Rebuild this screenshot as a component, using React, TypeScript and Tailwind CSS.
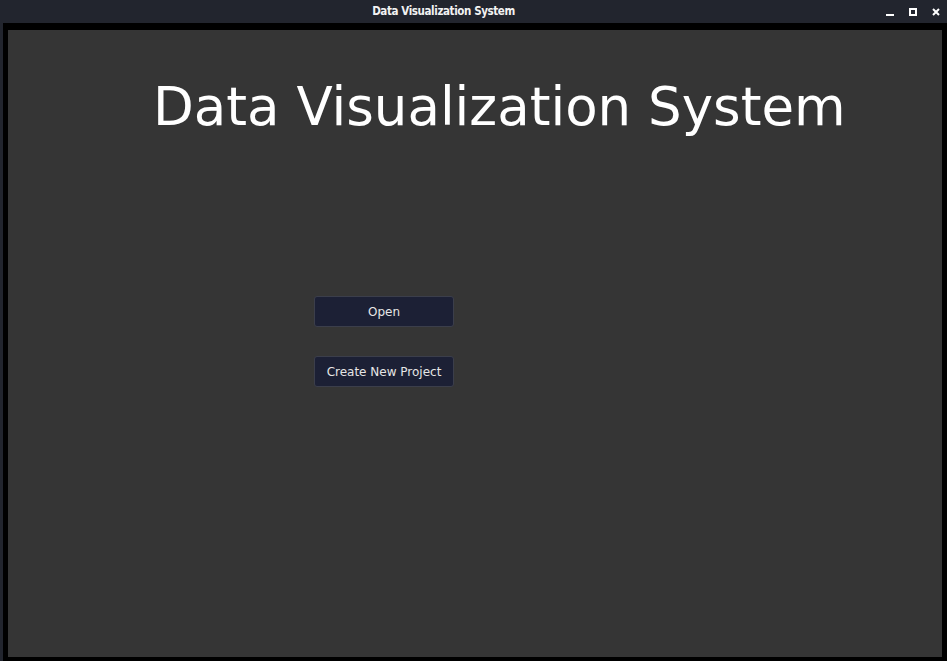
export default function App() {
  return (
    <div className="flex h-[661px] w-[947px] flex-col overflow-hidden bg-[#22252e]">
      {/* title bar */}
      <div className="relative flex h-[23px] shrink-0 items-center justify-center pr-[60px]">
        <span
          className="text-[11.5px] font-bold tracking-[-0.4px] text-[#f2f2f2]"
          style={{ fontFamily: '"Liberation Sans Narrow", "DejaVu Sans Condensed", "Liberation Sans", sans-serif' }}
        >
          Data Visualization System
        </span>
        <div className="absolute right-[7px] top-0 flex h-full items-center gap-[15px]">
          <svg width="8" height="8" viewBox="0 0 8 8">
            <rect x="0" y="6" width="8" height="2" fill="#fff" />
          </svg>
          <svg width="8" height="8" viewBox="0 0 8 8">
            <rect x="1" y="1" width="6" height="6" fill="none" stroke="#fff" strokeWidth="2" />
          </svg>
          <svg width="8" height="8" viewBox="0 0 8 8">
            <path d="M1 1 L7 7 M7 1 L1 7" stroke="#fff" strokeWidth="2" />
          </svg>
        </div>
      </div>

      {/* window frame */}
      <div className="ml-[3px] flex flex-1 flex-col bg-black pb-[4px] pl-[5px] pr-[5px] pt-[7px]">
        <div
          className="flex flex-1 flex-col bg-[#353535]"
          style={{ fontFamily: '"DejaVu Sans", Verdana, sans-serif' }}
        >
          <h1 className="mt-[42px] pl-[145px] text-[53px] leading-[70px] text-white">
            Data Visualization System
          </h1>

          <div className="mt-[154px] flex flex-col gap-[29px] pl-[306px]">
            <button className="h-[31px] w-[140px] rounded-[3px] border border-[#3b3e4b] bg-[#1c2035] text-[12px] text-[#e6e6e6]">
              Open
            </button>
            <button className="h-[31px] w-[140px] rounded-[3px] border border-[#3b3e4b] bg-[#1c2035] text-[12px] text-[#e6e6e6]">
              Create New Project
            </button>
          </div>
        </div>
      </div>
    </div>
  );
}
